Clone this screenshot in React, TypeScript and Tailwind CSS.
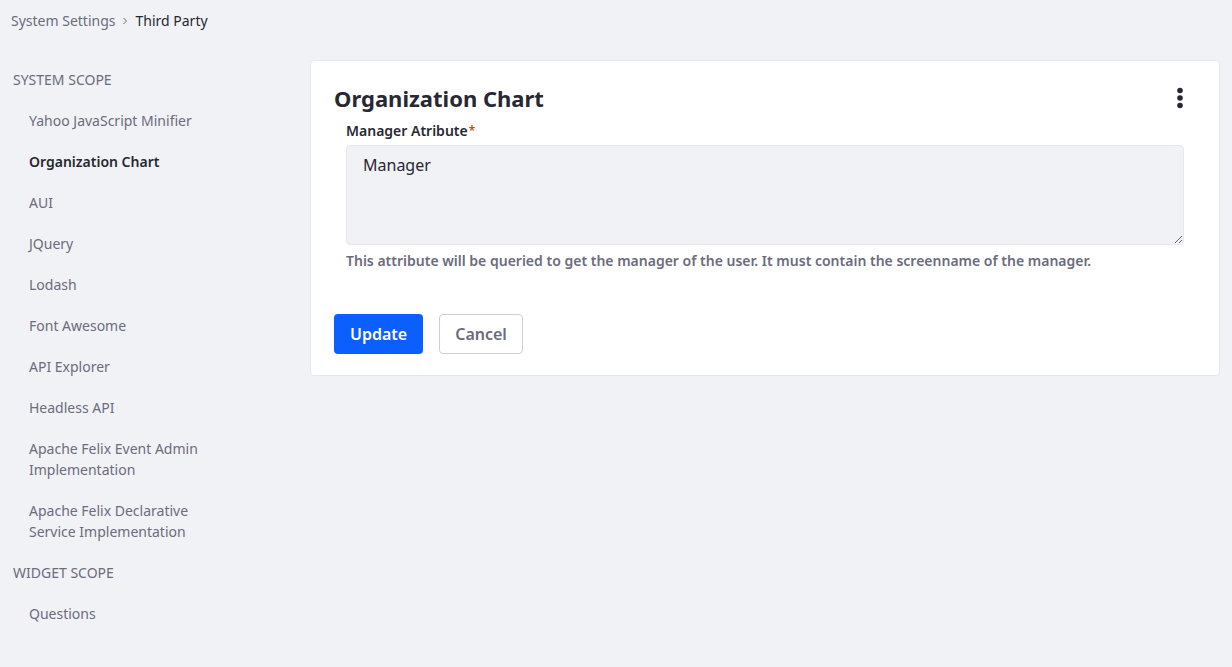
import React from "react";

const items: { label: string; active?: boolean }[] = [
  { label: "Yahoo JavaScript Minifier" },
  { label: "Organization Chart", active: true },
  { label: "AUI" },
  { label: "JQuery" },
  { label: "Lodash" },
  { label: "Font Awesome" },
  { label: "API Explorer" },
  { label: "Headless API" },
  { label: "Apache Felix Event Admin Implementation" },
  { label: "Apache Felix Declarative Service Implementation" },
];

export default function App() {
  return (
    <div
      className="min-h-[667px] w-full bg-[#f1f2f5] text-[#272833]"
      style={{ fontFamily: '"Noto Sans", "Open Sans", sans-serif' }}
    >
      <div className="flex h-[41px] items-center px-[11px] text-[14px]">
        <span className="text-[#6b6c7e]">System Settings</span>
        <svg className="mx-[6px]" width="8" height="8" viewBox="0 0 8 8" fill="none">
          <path d="M2.5 1 L5.5 4 L2.5 7" stroke="#6b6c7e" strokeWidth="1" />
        </svg>
        <span className="text-[#272833]">Third Party</span>
      </div>
      <div className="flex pt-[19px]">
        <div className="w-[310px] shrink-0 text-[14px] leading-[21px]">
          <div className="px-[13px] pb-[10px] pt-[9px] text-[#6b6c7e]">SYSTEM SCOPE</div>
          {items.map((it) => (
            <div
              key={it.label}
              className={`w-[200px] py-[10px] pl-[29px] ${
                it.active ? "font-semibold text-[#272833]" : "text-[#6b6c7e]"
              }`}
            >
              {it.label}
            </div>
          ))}
          <div className="px-[13px] py-[10px] text-[#6b6c7e]">WIDGET SCOPE</div>
          <div className="py-[10px] pl-[29px] text-[#6b6c7e]">Questions</div>
        </div>
        <div className="mr-[12px] flex-1">
          <div className="rounded-[4px] border border-[#e7e7ed] bg-white px-[23px] pb-[21px] pt-[23px]">
            <div className="flex items-center justify-between">
              <h1 className="text-[22px] font-bold leading-[28px] text-[#272833]">
                Organization Chart
              </h1>
              <svg width="10" height="24" viewBox="0 0 10 24" className="mr-[11px]">
                <circle cx="5" cy="4.5" r="2.8" fill="#272833" />
                <circle cx="5" cy="12" r="2.8" fill="#272833" />
                <circle cx="5" cy="19.5" r="2.8" fill="#272833" />
              </svg>
            </div>
            <div className="px-[12px]">
              <label className="mt-[8px] block text-[14px] font-semibold leading-[21px] text-[#272833]">
                Manager Atribute
                <span className="ml-[1px] align-top text-[12px] text-[#b95000]">*</span>
              </label>
              <textarea
                className="mt-[4px] block h-[100px] w-full resize-y rounded-[4px] border border-[#e7e7ed] bg-[#f1f2f5] px-[16px] pb-[8px] pt-[7px] text-[16px] leading-[24px] text-[#272833] outline-none"
                defaultValue="Manager"
              />
              <p className="mt-[5px] text-[14px] font-semibold leading-[21px] text-[#6b6c7e]">
                This attribute will be queried to get the manager of the user. It must contain the screenname of the manager.
              </p>
            </div>
            <div className="mt-[43px] flex gap-[16px]">
              <button className="h-[40px] rounded-[4px] bg-[#0b5fff] px-[16px] text-[16px] font-semibold text-white">
                Update
              </button>
              <button className="h-[40px] rounded-[4px] border border-[#cdced9] bg-white px-[15px] text-[16px] font-semibold text-[#6b6c7e]">
                Cancel
              </button>
            </div>
          </div>
        </div>
      </div>
    </div>
  );
}
